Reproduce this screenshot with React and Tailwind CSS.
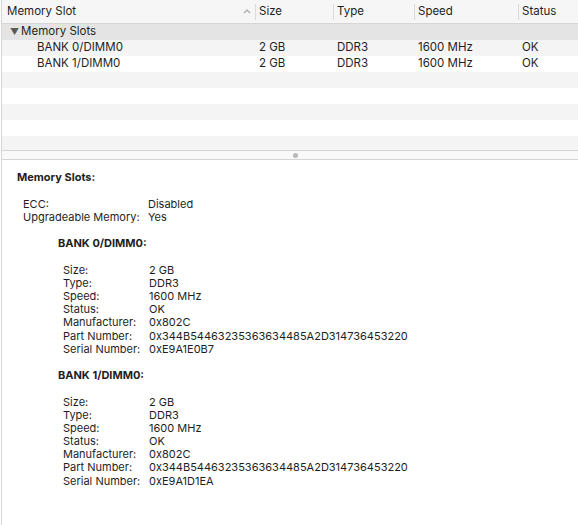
import React from "react";

const cols = [
  { key: "name", label: "Memory Slot", w: "w-[253px]" },
  { key: "size", label: "Size", w: "w-[78px]" },
  { key: "type", label: "Type", w: "w-[81px]" },
  { key: "speed", label: "Speed", w: "w-[104px]" },
  { key: "status", label: "Status", w: "flex-1" },
];

const slots = [
  {
    name: "BANK 0/DIMM0",
    size: "2 GB",
    type: "DDR3",
    speed: "1600 MHz",
    status: "OK",
    manufacturer: "0x802C",
    part: "0x344B54463235363634485A2D314736453220",
    serial: "0xE9A1E0B7",
  },
  {
    name: "BANK 1/DIMM0",
    size: "2 GB",
    type: "DDR3",
    speed: "1600 MHz",
    status: "OK",
    manufacturer: "0x802C",
    part: "0x344B54463235363634485A2D314736453220",
    serial: "0xE9A1D1EA",
  },
];

const font = { fontFamily: "Inter, 'Liberation Sans', sans-serif" };

function Row({ children, className = "" }) {
  return <div className={`flex h-[16px] items-center ${className}`}>{children}</div>;
}

function Line({ label, value, labelW }) {
  return (
    <div className="flex h-[13.2px] items-center">
      <span className={labelW}>{label}</span>
      <span>{value}</span>
    </div>
  );
}

export default function App() {
  return (
    <div
      className="ml-px h-[525px] border-l border-[#d6d6d6] bg-white text-[#1e1e1e] flex flex-col overflow-hidden"
      style={font}
    >
      {/* table header */}
      <div className="flex h-[24px] items-center border-b border-[#d6d6d6] bg-[#f6f6f6] text-[11.5px]">
        {cols.map((c, i) => (
          <div key={c.key} className={`${c.w} flex items-center h-full`}>
            {i > 0 && <div className="h-[16px] w-px bg-[#dadada]" />}
            <span className={i === 0 ? "pl-[5px]" : "pl-[3px]"}>{c.label}</span>
            {i === 0 && (
              <svg className="ml-auto mr-[4px]" width="8" height="5" viewBox="0 0 8 5">
                <path d="M1 4 L4 1 L7 4" fill="none" stroke="#a8a8a8" strokeWidth="1.2" />
              </svg>
            )}
          </div>
        ))}
      </div>

      {/* table body */}
      <div className="h-[126px] text-[11.5px]">
        <Row className="bg-[#e4e4e4]">
          <span className="pl-[8px] text-[9px] text-[#5a5a5a]">▼</span>
          <span className="pl-[2px]">Memory Slots</span>
        </Row>
        {slots.map((s, idx) => (
          <Row key={s.name} className={idx % 2 === 0 ? "bg-[#f4f4f4]" : "bg-white"}>
            <div className="w-[253px] pl-[35px]">{s.name}</div>
            <div className="w-[78px] pl-[4px]">{s.size}</div>
            <div className="w-[81px] pl-[4px]">{s.type}</div>
            <div className="w-[104px] pl-[4px]">{s.speed}</div>
            <div className="flex-1 pl-[4px]">{s.status}</div>
          </Row>
        ))}
        <Row className="bg-[#f4f4f4]" />
        <Row />
        <Row className="bg-[#f4f4f4]" />
        <Row />
        <Row className="bg-[#f4f4f4]" />
      </div>

      {/* splitter */}
      <div className="flex h-[10px] items-center pl-[291px] border-y border-[#d4d4d4] bg-[#f9f9f9]">
        <div className="h-[5px] w-[5px] rounded-full bg-[#b9b9b9]" />
      </div>

      {/* details */}
      <div className="flex-1 pt-[11px] pl-[15px] text-[11px]">
        <div className="flex h-[13.2px] items-center font-bold">Memory Slots:</div>
        <div className="h-[13.2px]" />
        <div className="pl-[6px]">
          <Line label="ECC:" value="Disabled" labelW="w-[125px]" />
          <Line label="Upgradeable Memory:" value="Yes" labelW="w-[125px]" />
          <div className="h-[13.2px]" />
          {slots.map((s) => (
            <div key={s.name} className="pl-[35px]">
              <div className="flex h-[13.2px] items-center font-bold">{s.name}:</div>
              <div className="h-[13.2px]" />
              <div className="pl-[5px]">
                <Line label="Size:" value={s.size} labelW="w-[86px]" />
                <Line label="Type:" value={s.type} labelW="w-[86px]" />
                <Line label="Speed:" value={s.speed} labelW="w-[86px]" />
                <Line label="Status:" value={s.status} labelW="w-[86px]" />
                <Line label="Manufacturer:" value={s.manufacturer} labelW="w-[86px]" />
                <Line label="Part Number:" value={s.part} labelW="w-[86px]" />
                <Line label="Serial Number:" value={s.serial} labelW="w-[86px]" />
              </div>
              <div className="h-[13.2px]" />
            </div>
          ))}
        </div>
      </div>
    </div>
  );
}
